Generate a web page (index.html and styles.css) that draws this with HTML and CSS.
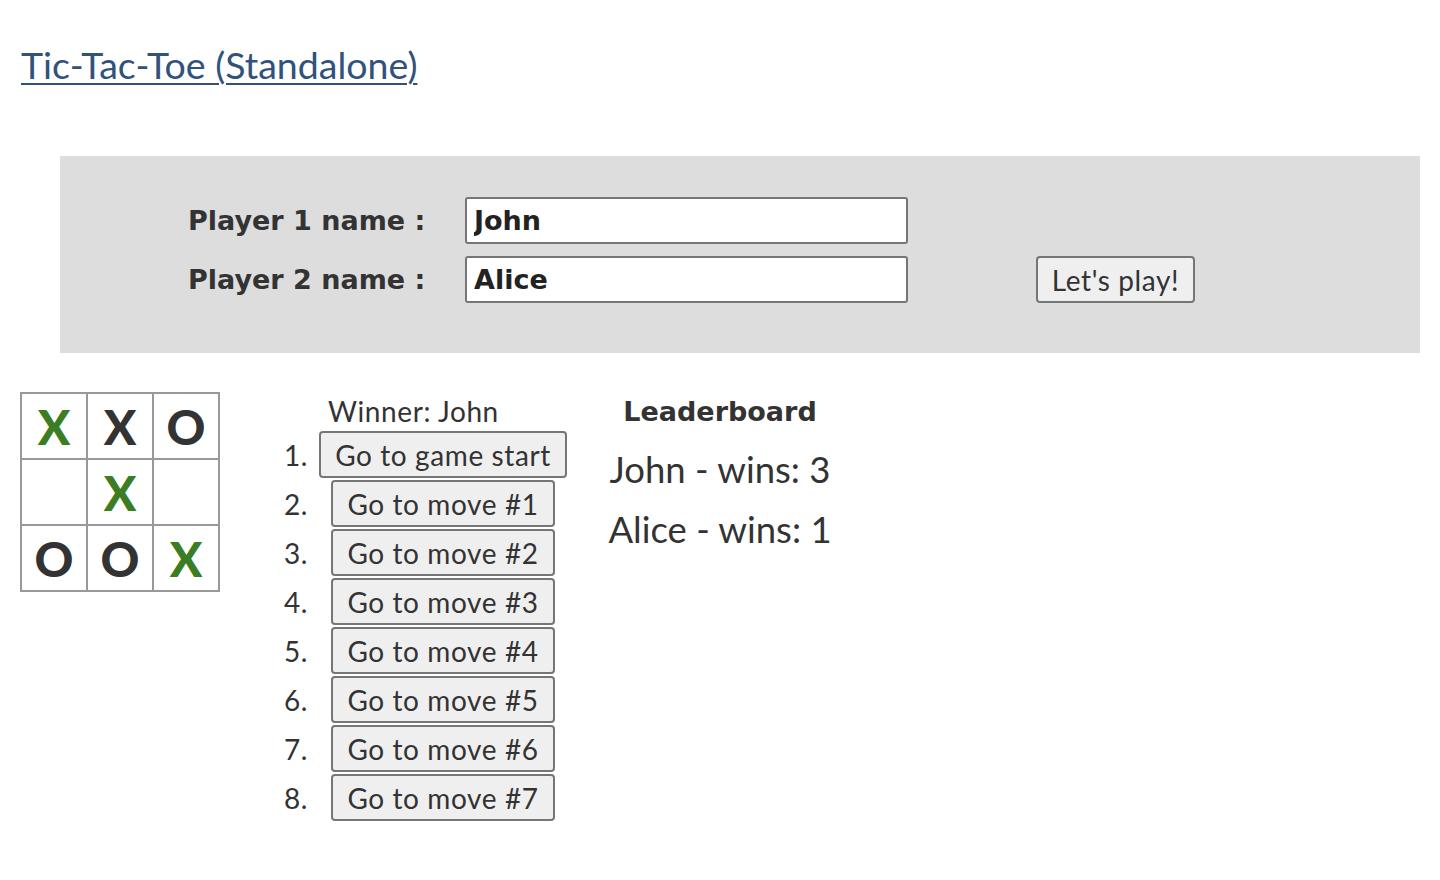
FILE: index.html
```html
<!DOCTYPE html>
<html lang="en">
<head>
<meta charset="utf-8">
<title>Tic-Tac-Toe (Standalone)</title>
<link rel="stylesheet" href="styles.css">
</head>
<body>
<h1 class="title"><a href="#">Tic-Tac-Toe (Standalone)</a></h1>

<div class="setup">
  <div class="setup-grid">
    <label class="label" for="p1">Player 1 name :</label>
    <input class="name-input" id="p1" type="text" value="John">
    <span></span>
    <label class="label" for="p2">Player 2 name :</label>
    <input class="name-input" id="p2" type="text" value="Alice">
    <button class="btn play-btn">Let's play!</button>
  </div>
</div>

<div class="game">
  <div class="board">
    <div class="cell x">X</div>
    <div class="cell">X</div>
    <div class="cell">O</div>
    <div class="cell"></div>
    <div class="cell x">X</div>
    <div class="cell"></div>
    <div class="cell">O</div>
    <div class="cell">O</div>
    <div class="cell x">X</div>
  </div>

  <div class="info">
    <div class="status">Winner: John</div>
    <ol class="moves">
      <li><button class="btn move-btn">Go to game start</button></li>
      <li><button class="btn move-btn">Go to move #1</button></li>
      <li><button class="btn move-btn">Go to move #2</button></li>
      <li><button class="btn move-btn">Go to move #3</button></li>
      <li><button class="btn move-btn">Go to move #4</button></li>
      <li><button class="btn move-btn">Go to move #5</button></li>
      <li><button class="btn move-btn">Go to move #6</button></li>
      <li><button class="btn move-btn">Go to move #7</button></li>
    </ol>
  </div>

  <div class="leaderboard">
    <div class="lb-title">Leaderboard</div>
    <div class="lb-row">John - wins: 3</div>
    <div class="lb-row">Alice - wins: 1</div>
  </div>
</div>
</body>
</html>
```

FILE: styles.css
```css
* { box-sizing: border-box; }

body {
  margin: 0;
  padding: 0 0 0 20px;
  font-family: "Lato", "Noto Sans", sans-serif;
  color: #333;
  background: #fff;
}

.title {
  margin: 0;
  padding: 40px 0 0 1px;
  font-size: 37.5px;
  font-weight: 400;
  line-height: 50px;
}

.title a {
  color: #30527b;
  text-decoration: underline;
  text-decoration-thickness: 2px;
  text-underline-offset: 4px;
}

.setup {
  margin: 66px 20px 0 40px;
  background: #dddddd;
  height: 197px;
  padding: 41px 0 0 128px;
}

.setup-grid {
  display: grid;
  grid-template-columns: 237px 443px auto;
  column-gap: 40px;
  row-gap: 12px;
  align-items: center;
}

.label {
  font-family: "DejaVu Sans", "Lato", sans-serif;
  font-weight: 700;
  font-size: 27px;
  color: #333;
  white-space: nowrap;
}

.name-input {
  height: 47px;
  width: 443px;
  border: 2px solid #767676;
  border-radius: 3px;
  background: #fff;
  font-family: "DejaVu Sans", "Lato", sans-serif;
  font-weight: 700;
  font-size: 27px;
  color: #222;
  padding: 0 7px;
  outline: none;
}

.btn {
  font-family: inherit;
  font-size: 28px;
  letter-spacing: 0.6px;
  color: #333;
  background: #efefef;
  border: 2px solid #767676;
  border-radius: 4px;
  height: 47px;
  padding: 0 15px;
  cursor: pointer;
}

.play-btn {
  justify-self: start;
  margin-left: 88px;
  width: 159px;
  padding: 0;
}

.game {
  display: flex;
  align-items: flex-start;
  margin-top: 39px;
}

.board {
  display: grid;
  grid-template-columns: repeat(3, 64px);
  grid-template-rows: repeat(3, 64px);
  gap: 2px;
  background: #999;
  padding: 2px;
}

.cell {
  background: #fff;
  display: flex;
  align-items: center;
  justify-content: center;
  font-size: 48px;
  font-weight: 900;
  color: #333;
}

.cell.x { color: #3a7d22; }

.info {
  margin-left: 48px;
  width: 300px;
}

.status {
  font-size: 28px;
  letter-spacing: 0.6px;
  line-height: 30px;
  margin: 4px 0 4px 60px;
}

.moves {
  margin: 0;
  padding: 0;
  list-style: none;
  counter-reset: move;
  font-size: 28px;
}

.moves li {
  counter-increment: move;
  display: flex;
  align-items: center;
  width: 300px;
  height: 49px;
}

.moves li::before {
  content: counter(move) ".";
  flex: 0 0 40px;
  text-align: right;
  margin-right: 10px;
  letter-spacing: 0.6px;
}

.move-btn {
  margin: 0 auto;
  padding: 0 14px;
}

.leaderboard {
  margin-left: 40px;
  width: 224px;
  text-align: center;
  padding-top: 2px;
}

.lb-title {
  font-family: "DejaVu Sans", "Lato", sans-serif;
  font-weight: 700;
  font-size: 27px;
  line-height: 36px;
  margin-bottom: 9px;
  white-space: nowrap;
}

.lb-row {
  font-size: 36.5px;
  line-height: 60px;
  white-space: nowrap;
}
```
